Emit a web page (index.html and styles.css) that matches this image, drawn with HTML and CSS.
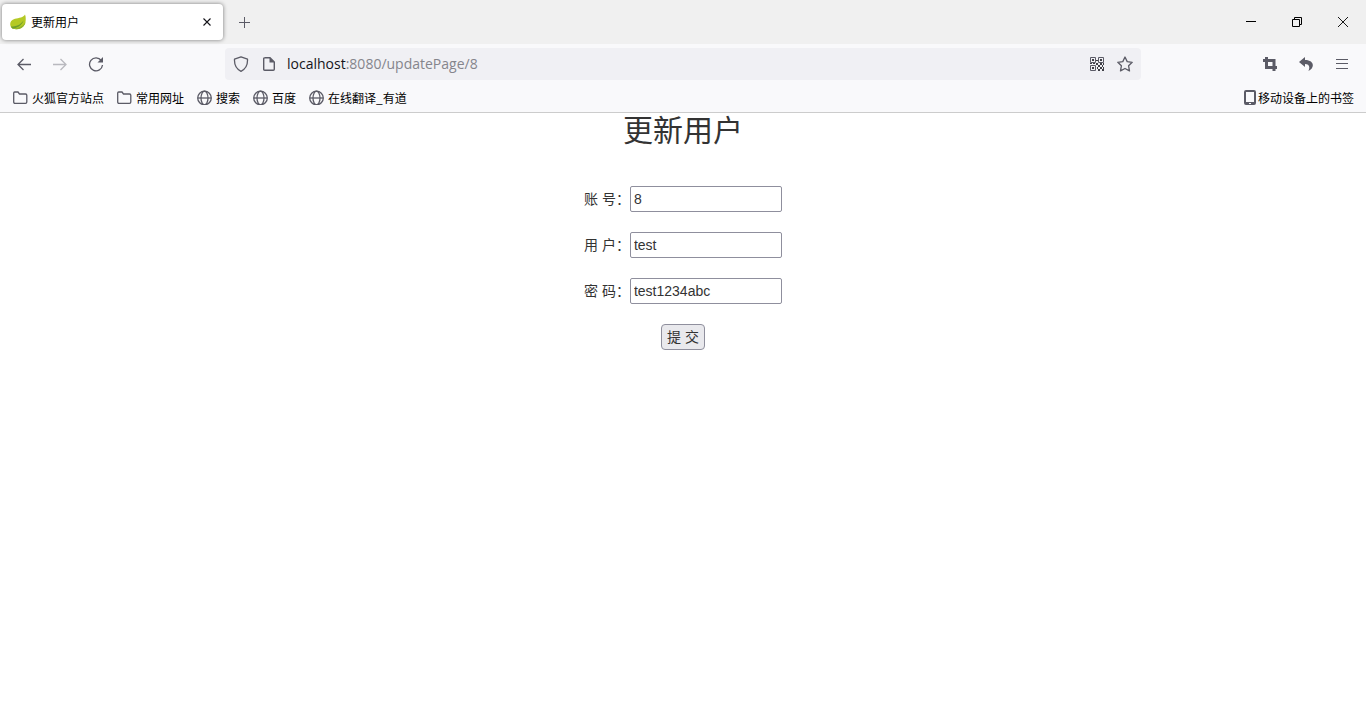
FILE: index.html
```
<!DOCTYPE html>
<html lang="zh-CN">
<head>
    <meta charset="UTF-8">
    <meta name="viewport" content="width=device-width, initial-scale=1.0">
    <title>更新用户</title>
    <link rel="stylesheet" href="styles.css">
</head>
<body>
    <header class="browser">
        <div class="tab-bar">
            <div class="tab">
                <svg class="icon leaf" viewBox="0 0 16 16">
                    <path d="M15 .5C13.500 3.500 9 3.800 5 4.800C1.500 5.800 0 8 .2 10.500C.4 12.500 1.500 14 3 14.800C8 16 13 14.500 15 10C16 7 16 3 15 .5Z" fill="#b4c925"/>
                    <path d="M.8 12.500C6 12.500 10.500 11 13.500 6.500C12.500 10.500 8.500 13.500 3 14.800C2 14.400 1.200 13.500 .8 12.500Z" fill="#6f9f2d"/>
                    <path d="M3 14.800C8 16 13 14.500 15 10L15.500 8C13.500 12 9 14 3 14.800Z" fill="#8fb32c"/>
                </svg>
                <span class="tab-title">更新用户</span>
                <button class="tab-close" aria-label="关闭标签页">
                    <svg class="icon" viewBox="0 0 16 16"><path d="M4.500 4.500L11.500 11.500M11.500 4.500L4.500 11.500" stroke="#15141a" stroke-width="1.100"/></svg>
                </button>
            </div>
            <button class="new-tab" aria-label="新建标签页">
                <svg class="icon" viewBox="0 0 16 16"><path d="M3 8.500H14M8.500 3V14"/></svg>
            </button>
            <div class="window-buttons">
                <button aria-label="最小化"><svg class="icon" viewBox="0 0 16 16"><path d="M3 7.500H13"/></svg></button>
                <button aria-label="还原"><svg class="icon" viewBox="0 0 16 16"><path d="M3.500 5.500H10.500V12.500H3.500ZM5.500 5.500V3.500H12.500V10.500H10.500"/></svg></button>
                <button aria-label="关闭"><svg class="icon" viewBox="0 0 16 16"><path d="M3 3L13 13M13 3L3 13" stroke-width=".9"/></svg></button>
            </div>
        </div>

        <nav class="nav-bar">
            <button aria-label="后退"><svg class="icon" viewBox="0 0 16 16"><path d="M15 8.500H2M7.500 3L2 8.500L7.500 14" stroke-width="1.300"/></svg></button>
            <button aria-label="前进" disabled><svg class="icon" viewBox="0 0 16 16"><path d="M1 8.500H14M8.500 3L14 8.500L8.500 14" stroke-width="1.300"/></svg></button>
            <button aria-label="刷新">
                <svg class="icon" viewBox="0 0 16 16"><path d="M13.300 4.500A6.500 6.500 0 1 0 14.500 9" stroke-width="1.300"/><path d="M15 1V6.500H9.500Z" fill="#5b5b66" stroke="none"/></svg>
            </button>
            <div class="spring"></div>
            <div class="url-bar">
                <svg class="icon" viewBox="0 0 16 16"><path d="M8 .8L14.500 3.200C14.800 8.500 12.800 13 8 15.300C3.200 13 1.200 8.500 1.500 3.200Z" stroke-width="1.300" stroke-linejoin="round"/></svg>
                <svg class="icon" viewBox="0 0 16 16"><path d="M3.500 1.700H9L13.300 6V13.300Q13.300 14.300 12.300 14.300H3.700Q2.700 14.300 2.700 13.300V2.700Q2.700 1.700 3.700 1.700Z" stroke-width="1.400"/><path d="M8.500 1.500L13.500 6.500H8.500Z" fill="#5b5b66" stroke="none"/></svg>
                <div class="url" role="textbox" contenteditable="true" spellcheck="false" aria-label="地址"><span class="host">localhost</span>:8080/updatePage/8</div>
                <svg class="icon" viewBox="0 0 16 16">
                    <path d="M1.500 1.500H6.500V6.500H1.500ZM9.500 1.500H14.500V6.500H9.500ZM1.500 9.500H6.500V14.500H1.500Z"/>
                    <path d="M3 3H5V5H3ZM11 3H13V5H11ZM3 11H5V13H3ZM7 4H9V5H7ZM7 7H9V9H7ZM1 7H3V8H1ZM4 7H6V8H4ZM11 7H13V9H11ZM14 7H15V9H14ZM9 9H11V11H9ZM13 9H14V11H13ZM11 11H13V13H11ZM8 11H9V13H8ZM9 13H11V15H9ZM14 11H15V13H14ZM13 13H15V15H13Z" fill="#3f3f46" stroke="none"/>
                </svg>
                <svg class="icon" viewBox="0 0 16 16"><path d="M8 1L10.200 5.600L15.200 6.300L11.600 9.800L12.500 14.900L8 12.500L3.500 14.900L4.400 9.800L.8 6.300L5.800 5.600Z" stroke-width="1.300" stroke-linejoin="round"/></svg>
            </div>
            <div class="spring"></div>
            <button aria-label="截图"><svg class="icon" viewBox="0 0 16 16"><path d="M1 4.500H12V15M4.500 1V11.500H15" stroke-width="3"/></svg></button>
            <button aria-label="撤销"><svg class="icon" viewBox="0 0 16 16"><path d="M7 1L1 6L7 11V8C10.500 8 12.500 10 10.500 15C17 12 16.500 4 7 4Z" fill="#5b5b66" stroke="none"/></svg></button>
            <button aria-label="菜单"><svg class="icon" viewBox="0 0 16 16"><path d="M2 3.500H14M2 7.500H14M2 12.500H14"/></svg></button>
        </nav>

        <div class="bookmarks">
            <a href="#"><svg class="icon" viewBox="0 -1 16 16"><path d="M1.700 3Q1.700 2 2.700 2H6L7.500 4H13.500Q14.800 4 14.800 5.300V12Q14.800 13.300 13.500 13.300H3Q1.700 13.300 1.700 12Z" stroke-width="1.300"/></svg>火狐官方站点</a>
            <a href="#"><svg class="icon" viewBox="0 -1 16 16"><path d="M1.700 3Q1.700 2 2.700 2H6L7.500 4H13.500Q14.800 4 14.800 5.300V12Q14.800 13.300 13.500 13.300H3Q1.700 13.300 1.700 12Z" stroke-width="1.300"/></svg>常用网址</a>
            <a href="#"><svg class="icon" viewBox="0 -1 16 16"><g stroke-width="1.300"><circle cx="8.500" cy="8" r="6.800"/><ellipse cx="8.500" cy="8" rx="3.500" ry="6.800"/><path d="M2 8H15"/></g></svg>搜索</a>
            <a href="#"><svg class="icon" viewBox="0 -1 16 16"><g stroke-width="1.300"><circle cx="8.500" cy="8" r="6.800"/><ellipse cx="8.500" cy="8" rx="3.500" ry="6.800"/><path d="M2 8H15"/></g></svg>百度</a>
            <a href="#"><svg class="icon" viewBox="0 -1 16 16"><g stroke-width="1.300"><circle cx="8.500" cy="8" r="6.800"/><ellipse cx="8.500" cy="8" rx="3.500" ry="6.800"/><path d="M2 8H15"/></g></svg>在线翻译_有道</a>
            <a href="#" class="mobile"><svg class="icon" viewBox="0 -1 16 16"><rect x="3" y="1" width="10" height="13" rx="1" stroke-width="2"/><path d="M3 13H13" stroke-width="2"/><path d="M7 13.500H9" stroke="#f9f9fb"/></svg>移动设备上的书签</a>
        </div>
    </header>

    <main class="content">
        <h2>更新用户</h2>
        <form>
            <div class="row"><label for="id">账 号：</label><input type="text" id="id" value="8"></div>
            <div class="row"><label for="username">用 户：</label><input type="text" id="username" value="test"></div>
            <div class="row"><label for="password">密 码：</label><input type="text" id="password" value="test1234abc"></div>
            <button type="button" class="submit">提 交</button>
        </form>
    </main>
</body>
</html>
```
FILE: styles.css
```
* {
    box-sizing: border-box;
}
body {
    margin: 0;
    background: #fff;
    color: #333;
    font-family: "Liberation Sans", "Noto Sans CJK SC", sans-serif;
    font-size: 14px;
}
button {
    padding: 0;
    border: none;
    background: none;
    font: inherit;
}
.icon {
    display: block;
    flex: none;
    width: 16px;
    height: 16px;
    fill: none;
    stroke: #5b5b66;
}

/* browser chrome */
.browser {
    border-bottom: 1px solid #ccc;
    background: #f9f9fb;
    color: #000;
    font-family: "Noto Sans CJK SC", sans-serif;
    font-size: 12px;
}
.tab-bar {
    display: flex;
    align-items: center;
    height: 44px;
    padding-left: 2px;
    background: #f0f0f0;
}
.tab {
    display: flex;
    align-items: center;
    width: 221px;
    height: 36px;
    padding: 0 8px;
    border-radius: 4px;
    background: #fff;
    box-shadow: 0 0 4px rgba(0, 0, 0, 0.5);
}
.tab-title {
    flex: 1;
    padding: 0 0 2px 5px;
}
.leaf {
    stroke: none;
}
.new-tab {
    display: flex;
    align-items: center;
    justify-content: center;
    width: 42px;
    height: 36px;
}
.window-buttons {
    display: flex;
    height: 100%;
    margin-left: auto;
}
.window-buttons button {
    display: flex;
    align-items: center;
    justify-content: center;
    width: 46px;
}
.window-buttons .icon {
    stroke: #000;
}
.nav-bar {
    display: flex;
    align-items: center;
    height: 40px;
    padding: 0 6px;
}
.nav-bar button {
    display: flex;
    flex: none;
    align-items: center;
    justify-content: center;
    width: 36px;
    height: 32px;
}
.nav-bar button:disabled {
    opacity: 0.4;
}
.spring {
    flex: 4 1 0;
}
.url-bar {
    display: flex;
    flex: 33 1 0;
    align-items: center;
    gap: 12px;
    height: 32px;
    border-radius: 4px;
    background: #f0f0f4;
}
.url-bar .icon:first-child {
    margin-left: 8px;
}
.url-bar .icon:last-child {
    margin-right: 8px;
}
.url {
    flex: 1;
    padding: 0 0 2px;
    margin-left: -2px;
    outline: none;
    color: #85858c;
    font-family: "Open Sans", sans-serif;
    font-size: 14px;
    white-space: nowrap;
}
.host {
    color: #15141a;
}
.bookmarks {
    display: flex;
    align-items: center;
    gap: 12px;
    height: 28px;
    padding: 0 12px 2px;
}
.bookmarks a {
    display: flex;
    align-items: center;
    gap: 4px;
    color: #000;
    text-decoration: none;
    white-space: nowrap;
}
.bookmarks .mobile {
    gap: 0;
    margin-left: auto;
}

/* page */
.content {
    text-align: center;
}
h2 {
    margin: 0 0 38px;
    font-size: 30px;
    font-weight: 400;
    line-height: 35px;
}
form {
    display: flex;
    flex-direction: column;
    align-items: center;
    gap: 20px;
}
.row {
    display: flex;
    align-items: center;
}
.row label {
    padding-bottom: 2px;
}
.row input {
    width: 152px;
    height: 26px;
    padding: 0 3px;
    border: 1px solid #8f8f9d;
    border-radius: 2px;
    background: #fff;
    color: #333;
    font: inherit;
}
.submit {
    height: 26px;
    padding: 0 5px 2px;
    border: 1px solid #8f8f9d;
    border-radius: 4px;
    background: #e9e9ed;
    color: #333;
}
```
